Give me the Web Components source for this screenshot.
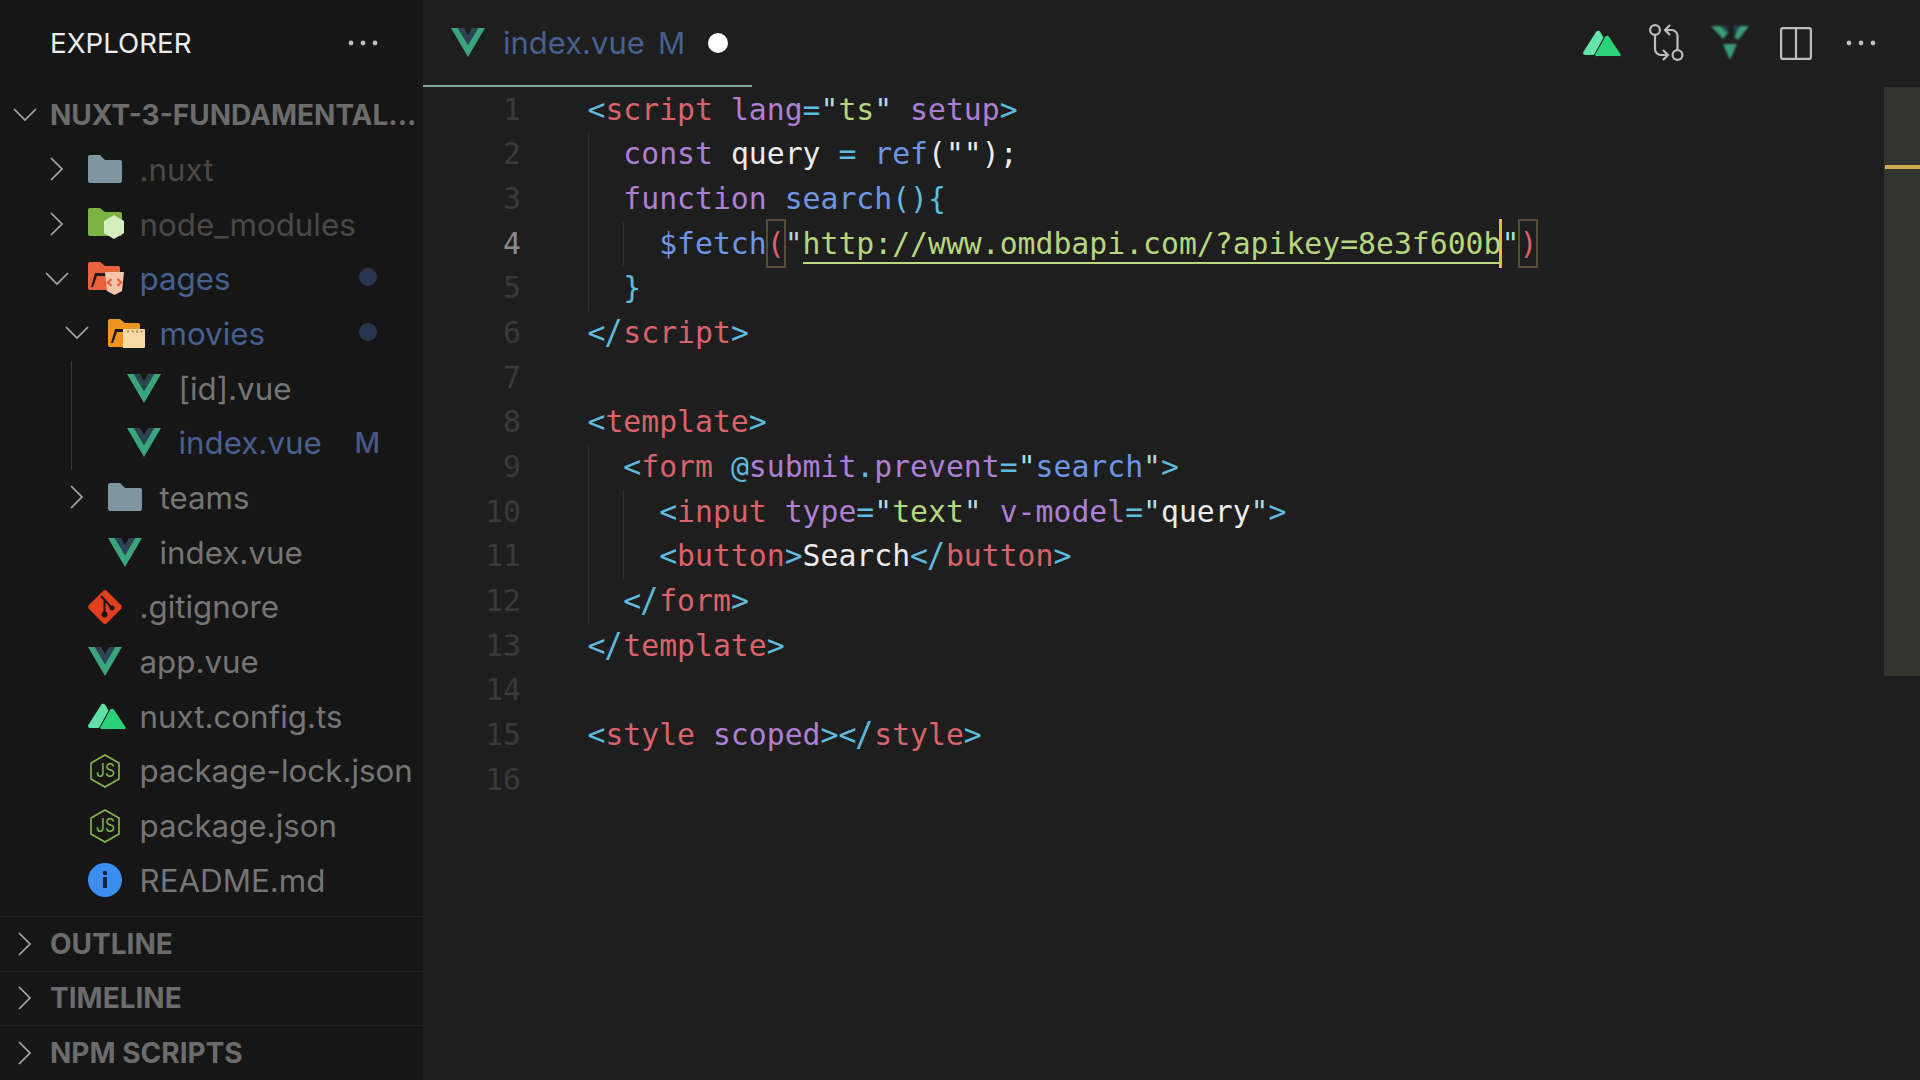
<!DOCTYPE html>
<html lang="en">
<head>
<meta charset="utf-8">
<title>index.vue</title>
<style>
  html, body { margin: 0; height: 100%; background: #1e1e1e; overflow: hidden; }
</style>
</head>
<body>
<vs-app>
  <vs-sidebar slot="side">
    <vs-row kind="root" open label="NUXT-3-FUNDAMENTAL..."></vs-row>
    <vs-row chevron="right" icon="folder" label=".nuxt" state="ignored"></vs-row>
    <vs-row chevron="right" icon="node" label="node_modules" state="ignored"></vs-row>
    <vs-row chevron="down" icon="pages" label="pages" state="changed" dot></vs-row>
    <vs-row depth="1" chevron="down" icon="movies" label="movies" state="changed" dot></vs-row>
    <vs-row depth="2" icon="vue" label="[id].vue" guide></vs-row>
    <vs-row depth="2" icon="vue" label="index.vue" state="changed" badge="M" guide></vs-row>
    <vs-row depth="1" chevron="right" icon="folder" label="teams"></vs-row>
    <vs-row depth="1" icon="vue" label="index.vue"></vs-row>
    <vs-row icon="git" label=".gitignore"></vs-row>
    <vs-row icon="vue" label="app.vue"></vs-row>
    <vs-row icon="nuxt" label="nuxt.config.ts"></vs-row>
    <vs-row icon="nodejs" label="package-lock.json"></vs-row>
    <vs-row icon="nodejs" label="package.json"></vs-row>
    <vs-row icon="info" label="README.md"></vs-row>
    <vs-section slot="sections" label="OUTLINE"></vs-section>
    <vs-section slot="sections" label="TIMELINE"></vs-section>
    <vs-section slot="sections" label="NPM SCRIPTS"></vs-section>
  </vs-sidebar>
  <vs-tabbar slot="tabs">
    <vs-tab label="index.vue"></vs-tab>
  </vs-tabbar>
  <vs-editor slot="editor">
    <vs-line n="1"><i class="p">&lt;</i><i class="t">script</i> <i class="a">lang</i><i class="p">=</i><i class="q">"</i><i class="s">ts</i><i class="q">"</i> <i class="a">setup</i><i class="p">&gt;</i></vs-line>
    <vs-line n="2" indent="1">  <i class="a">const</i> <i class="w">query</i> <i class="p">=</i> <i class="f">ref</i><i class="w">("");</i></vs-line>
    <vs-line n="3" indent="1">  <i class="a">function</i> <i class="f">search</i><i class="p">(){</i></vs-line>
    <vs-line n="4" indent="2" active>    <i class="f">$fetch</i><i class="r box">(</i><i class="q">"</i><i class="s u">http://www.omdbapi.com/?apikey=8e3f600b</i><i class="q caret">"</i><i class="r box">)</i></vs-line>
    <vs-line n="5" indent="1">  <i class="p">}</i></vs-line>
    <vs-line n="6"><i class="p">&lt;</i><i class="p sl">/</i><i class="t">script</i><i class="p">&gt;</i></vs-line>
    <vs-line n="7"></vs-line>
    <vs-line n="8"><i class="p">&lt;</i><i class="t">template</i><i class="p">&gt;</i></vs-line>
    <vs-line n="9" indent="1">  <i class="p">&lt;</i><i class="t">form</i> <i class="p">@</i><i class="a">submit</i><i class="p">.</i><i class="a">prevent</i><i class="p">=</i><i class="q">"</i><i class="f">search</i><i class="q">"</i><i class="p">&gt;</i></vs-line>
    <vs-line n="10" indent="2">    <i class="p">&lt;</i><i class="t">input</i> <i class="a">type</i><i class="p">=</i><i class="q">"</i><i class="s">text</i><i class="q">"</i> <i class="a">v-model</i><i class="p">=</i><i class="q">"</i><i class="w">query</i><i class="q">"</i><i class="p">&gt;</i></vs-line>
    <vs-line n="11" indent="2">    <i class="p">&lt;</i><i class="t">button</i><i class="p">&gt;</i><i class="w">Search</i><i class="p">&lt;</i><i class="p sl">/</i><i class="t">button</i><i class="p">&gt;</i></vs-line>
    <vs-line n="12" indent="1">  <i class="p">&lt;</i><i class="p sl">/</i><i class="t">form</i><i class="p">&gt;</i></vs-line>
    <vs-line n="13"><i class="p">&lt;</i><i class="p sl">/</i><i class="t">template</i><i class="p">&gt;</i></vs-line>
    <vs-line n="14"></vs-line>
    <vs-line n="15"><i class="p">&lt;</i><i class="t">style</i> <i class="a">scoped</i><i class="p">&gt;&lt;</i><i class="p sl">/</i><i class="t">style</i><i class="p">&gt;</i></vs-line>
    <vs-line n="16"></vs-line>
  </vs-editor>
</vs-app>

<script>
const NUXT = (a, b) => `<svg viewBox="0 0 37 26" width="37" height="26"><path fill="${a}" d="M13 2a2.500 2.500 0 0 1 4.300 0l3.200 5.500L11.500 24a2 2 0 0 1-1.500 1H2a2 2 0 0 1-1.700-3z"/><path fill="${b}" d="M22 7a2.500 2.500 0 0 1 4.200 0l10.500 16a1.500 1.500 0 0 1-1.300 3H14.500a1.500 1.500 0 0 1-1.300-3z"/></svg>`

const ICONS = {
  vue: `<svg viewBox="0 0 34 29" width="34" height="29"><path fill="#3aa47c" d="M0 0h7l10 17L27 0h7L17 29z"/><path fill="#2f4256" d="M7 0h6l4 7 4-7h6L17 17z"/></svg>`,
  folder: `<svg viewBox="0 0 34 28" width="34" height="28"><path fill="#7d96a1" d="M2 0h10l5 5h15a2 2 0 0 1 2 2v19a2 2 0 0 1-2 2H2a2 2 0 0 1-2-2V2a2 2 0 0 1 2-2z"/></svg>`,
  node: `<svg viewBox="0 0 37 32" width="37" height="32"><path fill="#7cb342" d="M2 0h10l5 4h15a2 2 0 0 1 2 2v20a2 2 0 0 1-2 2H2a2 2 0 0 1-2-2V2a2 2 0 0 1 2-2z"/><path fill="#d6edc0" d="M26 7l10 6v12l-10 6-10-6V13z"/></svg>`,
  pages: `<svg viewBox="0 0 36 33" width="36" height="33"><path fill="#e8623f" d="M2 0h10l5 4h13a2 2 0 0 1 2 2v20a2 2 0 0 1-2 2H2a2 2 0 0 1-2-2V2a2 2 0 0 1 2-2z"/><path fill="#211a18" d="M3 25L7 11h11v3H9L5 25z"/><path fill="#f7c4ae" d="M17 10h19l-2 19-7.500 4-7.500-4z"/><path fill="none" stroke="#e8623f" stroke-width="2.400" d="M23.500 17l-3.500 3.500 3.500 3.500M29.500 17l3.500 3.500-3.500 3.500"/></svg>`,
  movies: `<svg viewBox="0 0 37 29" width="37" height="29"><path fill="#ee9322" d="M2 0h10l5 4h13a2 2 0 0 1 2 2v20a2 2 0 0 1-2 2H2a2 2 0 0 1-2-2V2a2 2 0 0 1 2-2z"/><path fill="#211a12" d="M3 24L7 10h10v3H9L5 24z"/><path fill="#fbd9a4" d="M15 10h21a1 1 0 0 1 1 1v17a1 1 0 0 1-1 1H15z"/><path stroke="#b08a4f" stroke-width="2" stroke-dasharray="2 2.500" d="M19 12.500h16"/></svg>`,
  git: `<svg viewBox="0 0 34 34" width="34" height="34"><path fill="#e0401f" d="M15 1a3 3 0 0 1 4 0l14 14a3 3 0 0 1 0 4L19 33a3 3 0 0 1-4 0L1 19a3 3 0 0 1 0-4z"/><path fill="none" stroke="#1c1512" stroke-width="2" d="M13 6l11 12M16.500 10v14"/><circle cx="16.500" cy="24.500" r="3" fill="#1c1512"/><circle cx="24" cy="18" r="2.500" fill="#1c1512"/></svg>`,
  nuxt: NUXT('#5fe0a5', '#2ad17a'),
  nodejs: `<svg viewBox="-2 0 34 34" width="34" height="34"><path fill="none" stroke="#86b84a" stroke-width="1.600" d="M15 1l14 8v16l-14 8-14-8V9z"/><text x="15.500" y="23" text-anchor="middle" font-family="Inter, sans-serif" font-size="18" textLength="19" lengthAdjust="spacingAndGlyphs" fill="#86b84a">JS</text></svg>`,
  info: `<svg viewBox="0 0 34 34" width="34" height="34"><circle cx="17" cy="17" r="17" fill="#3b8eee"/><rect x="15" y="14" width="4" height="11" fill="#14233a"/><circle cx="17" cy="10" r="2.200" fill="#14233a"/></svg>`,
  nuxtTop: NUXT('#65e4aa', '#2bd27c'),
  compare: `<svg viewBox="0 0 36 38" width="36" height="38" fill="none" stroke="#bdbdbd" stroke-width="2.200"><circle cx="6" cy="6" r="4.900"/><circle cx="28.500" cy="31" r="4.900"/><path d="M6 11v14a6 6 0 0 0 6 6h7M14 26l5 5-5 5"/><path d="M28.500 26V12a6 6 0 0 0-6-6h-6M21 1l-5 5 5 5"/></svg>`,
  vueDim: `<svg viewBox="0 0 40 36" width="40" height="36"><defs><filter id="b" x="-20%" y="-20%" width="140%" height="140%"><feGaussianBlur stdDeviation=".8"/></filter></defs><g filter="url(#b)"><path fill="#2c3c55" d="M11 1h7v6zM23 1h8l-6 8z"/><path fill="#3a9c78" d="M1 1h9l8 7-5 6z"/><path fill="#3a9c78" d="M39 1h-9l-6 11 4 3z"/><path fill="#3a9c78" d="M13 19h14l-7 16z"/></g></svg>`,
  split: `<svg viewBox="0 0 32 33" width="32" height="33" fill="none" stroke="#bdbdbd" stroke-width="2.200"><rect x="1.100" y="1.100" width="29.800" height="30.800" rx="2"/><path d="M16 1v31"/></svg>`,
  dots: `<svg viewBox="0 0 30 6" width="30" height="6" fill="#bdbdbd"><circle cx="3" cy="3" r="2.400"/><circle cx="15" cy="3" r="2.400"/><circle cx="27" cy="3" r="2.400"/></svg>`,
  right: `<svg viewBox="0 0 14 24" width="14" height="24" fill="none" stroke="#a8a8a8" stroke-width="1.700"><path d="M1 1l11 11L1 23"/></svg>`,
  down: `<svg viewBox="0 0 24 14" width="24" height="14" fill="none" stroke="#a8a8a8" stroke-width="1.700"><path d="M1 1l11 11L23 1"/></svg>`,
}

class VsIcon extends HTMLElement {
  constructor() {
    super()
    this.attachShadow({ mode: 'open' })
  }

  connectedCallback() {
    this.shadowRoot.innerHTML = `
      <style>
        :host { display: inline-flex; align-items: center; justify-content: center; flex: none; }
        svg { display: block; overflow: visible; }
      </style>
      ${ICONS[this.getAttribute('name')] || ''}`
  }
}

class VsApp extends HTMLElement {
  constructor() {
    super()
    this.attachShadow({ mode: 'open' }).innerHTML = `
      <style>
        :host {
          display: flex;
          width: 1920px;
          height: 1080px;
          overflow: hidden;
          background: #1e1e1e;
          font-family: Inter, "Noto Sans", sans-serif;
        }
        main { flex: 1; min-width: 0; display: flex; flex-direction: column; }
      </style>
      <slot name="side"></slot>
      <main>
        <slot name="tabs"></slot>
        <slot name="editor"></slot>
      </main>`
  }
}

class VsSidebar extends HTMLElement {
  constructor() {
    super()
    this.attachShadow({ mode: 'open' }).innerHTML = `
      <style>
        :host {
          display: flex;
          flex-direction: column;
          flex: none;
          width: 423px;
          height: 1080px;
          overflow: hidden;
          background: #161616;
        }
        header {
          flex: none;
          height: 87px;
          display: flex;
          align-items: center;
          justify-content: space-between;
          padding: 0 45px 1px 50px;
          box-sizing: border-box;
          color: #ececec;
          font-size: 27.700px;
        }
        .tree { flex: 1; min-height: 0; }
      </style>
      <header><span>EXPLORER</span><vs-icon name="dots"></vs-icon></header>
      <div class="tree"><slot></slot></div>
      <slot name="sections"></slot>`
  }
}

class VsRow extends HTMLElement {
  constructor() {
    super()
    this.attachShadow({ mode: 'open' })
  }

  connectedCallback() {
    const depth = Number(this.getAttribute('depth') || 0)
    const chevron = this.getAttribute('chevron')
    const icon = this.getAttribute('icon')
    const badge = this.getAttribute('badge')
    const isRoot = this.getAttribute('kind') === 'root'
    this.style.setProperty('--depth', depth)
    this.shadowRoot.innerHTML = `
      <style>
        :host {
          display: flex;
          align-items: center;
          position: relative;
          height: 54.7px;
          box-sizing: border-box;
          padding-left: calc(40px + var(--depth) * 20px);
          padding-right: 35px;
          color: #757575;
          font-size: 31.300px;
          white-space: nowrap;
        }
        :host([state="ignored"]) { color: #494949; }
        :host([state="changed"]) { color: #47608f; }
        :host([depth="2"]) { padding-left: 79px; }
        :host([kind="root"]) {
          height: 55px;
          padding-left: 8px;
          padding-right: 0;
          color: #6c6c6c;
          font-weight: 700;
          font-size: 28px;
        }
        :host([guide])::before {
          content: "";
          position: absolute;
          left: 71px;
          top: 0;
          bottom: 0;
          width: 1px;
          background: #3a3a3a;
        }
        .tw { flex: none; width: 34px; display: flex; justify-content: center; margin-right: 14px; }
        :host([kind="root"]) .tw { margin-right: 8px; }
        .ic { flex: none; width: 34px; display: flex; justify-content: flex-start; margin-right: 17.500px; }
        .lb { flex: 1; min-width: 0; padding-top: 1px; }
        .dot { flex: none; width: 18px; height: 18px; border-radius: 50%; background: #2a3550; margin-right: 11px; margin-top: -3px; }
        .bd { flex: none; font-weight: 500; font-size: 28px; color: #46598a; margin-right: 8px; }
      </style>
      ${isRoot
        ? `<span class="tw"><vs-icon name="down"></vs-icon></span>`
        : `<span class="tw">${chevron ? `<vs-icon name="${chevron}"></vs-icon>` : ''}</span>`}
      ${icon ? `<span class="ic"><vs-icon name="${icon}"></vs-icon></span>` : ''}
      <span class="lb">${this.getAttribute('label')}</span>
      ${this.hasAttribute('dot') ? '<span class="dot"></span>' : ''}
      ${badge ? `<span class="bd">${badge}</span>` : ''}`
  }
}

class VsSection extends HTMLElement {
  constructor() {
    super()
    this.attachShadow({ mode: 'open' })
  }

  connectedCallback() {
    this.shadowRoot.innerHTML = `
      <style>
        :host {
          display: flex;
          align-items: center;
          flex: none;
          height: 54.7px;
          box-sizing: border-box;
          border-top: 1px solid #232323;
          padding-left: 8px;
          color: #6c6c6c;
          font-weight: 700;
          font-size: 28px;
        }
        .tw { width: 34px; display: flex; justify-content: center; margin-right: 8px; }
      </style>
      <span class="tw"><vs-icon name="right"></vs-icon></span>
      <span>${this.getAttribute('label')}</span>`
  }
}

class VsTabbar extends HTMLElement {
  constructor() {
    super()
    this.attachShadow({ mode: 'open' }).innerHTML = `
      <style>
        :host { display: flex; flex: none; height: 87px; background: #1e1e1e; }
        .actions { margin-left: auto; display: flex; align-items: center; padding: 0 44px 1px 0; }
        .actions vs-icon:nth-child(1) { margin-right: 29px; }
        .actions vs-icon:nth-child(2) { margin-right: 25px; }
        .actions vs-icon:nth-child(3) { margin-right: 30px; }
        .actions vs-icon:nth-child(4) { margin-right: 34px; }
      </style>
      <slot></slot>
      <div class="actions">
        <vs-icon name="nuxtTop"></vs-icon>
        <vs-icon name="compare"></vs-icon>
        <vs-icon name="vueDim"></vs-icon>
        <vs-icon name="split"></vs-icon>
        <vs-icon name="dots"></vs-icon>
      </div>`
  }
}

class VsTab extends HTMLElement {
  constructor() {
    super()
    this.attachShadow({ mode: 'open' })
  }

  connectedCallback() {
    this.shadowRoot.innerHTML = `
      <style>
        :host {
          display: flex;
          align-items: center;
          width: 329px;
          height: 87px;
          box-sizing: border-box;
          padding: 0 0 0 28px;
          border-bottom: 2px solid #7fa8a0;
          color: #47608f;
          font-size: 31px;
        }
        .lb { margin-left: 18px; }
        .m { margin-left: 13px; font-size: 30px; }
        .dot { width: 20px; height: 20px; border-radius: 50%; background: #fff; margin-left: 23px; }
      </style>
      <vs-icon name="vue"></vs-icon>
      <span class="lb">${this.getAttribute('label')}</span>
      <span class="m">M</span>
      <span class="dot"></span>`
  }
}

class VsEditor extends HTMLElement {
  constructor() {
    super()
    this.attachShadow({ mode: 'open' }).innerHTML = `
      <style>
        :host { display: block; flex: 1; min-height: 0; position: relative; background: #1e1e1e; padding-top: .5px; }
        .ruler { position: absolute; right: 0; top: 0; width: 36px; height: 589px; background: #33332f; }
        .mark { position: absolute; left: 1px; right: 0; top: 78px; height: 4px; background: #d2a850; }
      </style>
      <slot></slot>
      <div class="ruler"><div class="mark"></div></div>`
  }
}

class VsLine extends HTMLElement {
  constructor() {
    super()
    this.attachShadow({ mode: 'open' })
  }

  connectedCallback() {
    const indent = Number(this.getAttribute('indent') || 0)
    let guides = ''
    for (let i = 0; i < indent; i++) guides += `<b class="guide" style="left:${i * 35.86}px"></b>`
    this.shadowRoot.innerHTML = `
      <style>
        :host {
          display: flex;
          height: 44.7px;
          line-height: 44.7px;
          font-family: "DejaVu Sans Mono", "Liberation Mono", monospace;
          font-size: 29.78px;
          white-space: pre;
          color: #e6e6e6;
        }
        .n { flex: none; width: 98px; text-align: right; color: #3a3a3a; }
        :host([active]) .n { color: #8a8a8a; }
        .code { position: relative; margin-left: 66.500px; flex: 1; }
        .guide { position: absolute; top: 0; bottom: 0; width: 1px; background: #2f2f2f; }
        ::slotted(i) { font-style: normal; position: relative; }
        ::slotted(.p) { color: #5fbbdf; }
        ::slotted(.t) { color: #d8636b; }
        ::slotted(.a) { color: #ad80d5; }
        ::slotted(.q) { color: #a9dbe2; }
        ::slotted(.s) { color: #b6d77f; }
        ::slotted(.w) { color: #ececec; }
        ::slotted(.f) { color: #6f96e4; }
        ::slotted(.r) { color: #d8636b; }
        ::slotted(.u) { border-bottom: 2px solid #bcd97f; padding-bottom: 1px; }
        ::slotted(.box)::before {
          content: "";
          position: absolute;
          left: -1px;
          right: -1px;
          top: -7px;
          bottom: -7px;
          border: 2px solid #584d33;
        }
        ::slotted(.caret)::before {
          content: "";
          position: absolute;
          left: -2px;
          top: -7px;
          bottom: -7px;
          width: 3px;
          background: #e8b93c;
        }
        ::slotted(.sl) { display: inline-block; transform: translateX(-1px) scaleY(1.12); }
      </style>
      <span class="n">${this.getAttribute('n')}</span>
      <div class="code">${guides}<slot></slot></div>`
  }
}

customElements.define('vs-icon', VsIcon)
customElements.define('vs-row', VsRow)
customElements.define('vs-section', VsSection)
customElements.define('vs-sidebar', VsSidebar)
customElements.define('vs-tab', VsTab)
customElements.define('vs-tabbar', VsTabbar)
customElements.define('vs-line', VsLine)
customElements.define('vs-editor', VsEditor)
customElements.define('vs-app', VsApp)
</script>
</body>
</html>
